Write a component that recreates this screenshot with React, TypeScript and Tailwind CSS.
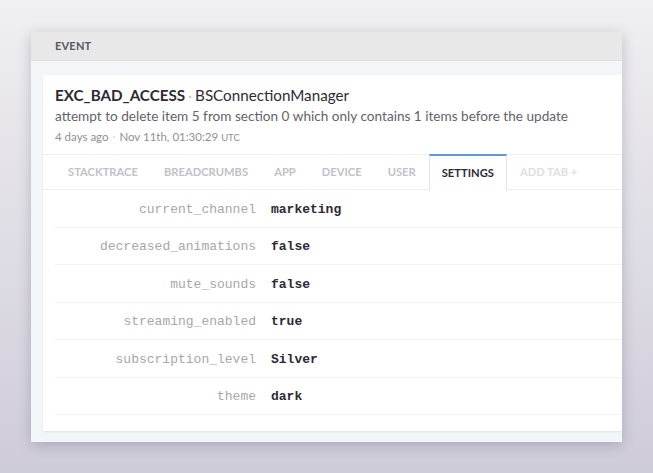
import React from "react";

const TABS = ["Stacktrace", "Breadcrumbs", "App", "Device", "User", "Settings"];

const SETTINGS = [
  { key: "current_channel", value: "marketing" },
  { key: "decreased_animations", value: "false" },
  { key: "mute_sounds", value: "false" },
  { key: "streaming_enabled", value: "true" },
  { key: "subscription_level", value: "Silver" },
  { key: "theme", value: "dark" },
];

export default function App() {
  return (
    <div className="w-full h-[473px] bg-gradient-to-b from-[#f0eff1] to-[#cfccd9] pt-[32px] pl-[31px] font-['Lato','Noto_Sans',sans-serif]">
      <div className="w-[591px] overflow-hidden bg-[#f3f6f9] shadow-[0_3px_12px_rgba(60,50,90,0.25)]">
        {/* header */}
        <div className="h-[29px] bg-[#e9e8e9] border-b border-[#e1e0e3] flex items-center pl-[24px] text-[11px] font-bold text-[#5b5662] tracking-[0.2px]">
          EVENT
        </div>

        <div className="pt-[14px] pl-[12px] pb-[11px]">
          <div className="bg-white shadow-[0_1px_2px_rgba(0,0,0,0.08)] pb-[16px]">
            <div className="px-[12px] pt-[10px] pb-[7px]">
              <div className="text-[15.2px] leading-[20px] text-[#2f2936]">
                <span className="font-bold">EXC_BAD_ACCESS</span>
                <span className="text-[#c8c4cc] mx-[3px]">·</span>
                <span>BSConnectionManager</span>
              </div>
              <div className="text-[13.6px] leading-[20px] text-[#665f6d] mt-px">
                attempt to delete item 5 from section 0 which only contains 1 items before the update
              </div>
              <div className="text-[11.5px] leading-[18px] text-[#938e99] mt-[2px]">
                4 days ago <span className="text-[#cfcbd3] mx-[1px]">·</span> Nov 11th, 01:30:29{" "}
                <span className="text-[9.5px]">UTC</span>
              </div>
            </div>

            <div className="flex border-t border-b border-[#efedf1] pl-[12px] h-[36px]">
              {TABS.map((t) =>
                t === "Settings" ? (
                  <div
                    key={t}
                    className="-mt-px -mb-px h-[37px] px-[12px] flex items-center bg-white border-t-2 border-t-[#5b9ad8] border-x border-x-[#e6e4ea] text-[11.2px] font-bold uppercase text-[#2f2936]"
                  >
                    {t}
                  </div>
                ) : (
                  <div
                    key={t}
                    className="px-[13px] flex items-center text-[11.2px] font-bold uppercase text-[#c4c0c9]"
                  >
                    {t}
                  </div>
                )
              )}
              <div className="px-[13px] flex items-center text-[11.2px] font-bold uppercase text-[#e0dde3]">
                Add tab +
              </div>
            </div>

            <div className="pl-[12px]">
              {SETTINGS.map((s) => (
                <div
                  key={s.key}
                  className="flex items-center h-[37.5px] pt-[2px] border-b border-[#f3f2f5] font-['Liberation_Mono',monospace] text-[13px]"
                >
                  <div className="w-[201px] text-right text-[#a9a6ad]">{s.key}</div>
                  <div className="ml-[15px] font-bold text-[#2f2936]">{s.value}</div>
                </div>
              ))}
            </div>
          </div>
        </div>
      </div>
    </div>
  );
}
